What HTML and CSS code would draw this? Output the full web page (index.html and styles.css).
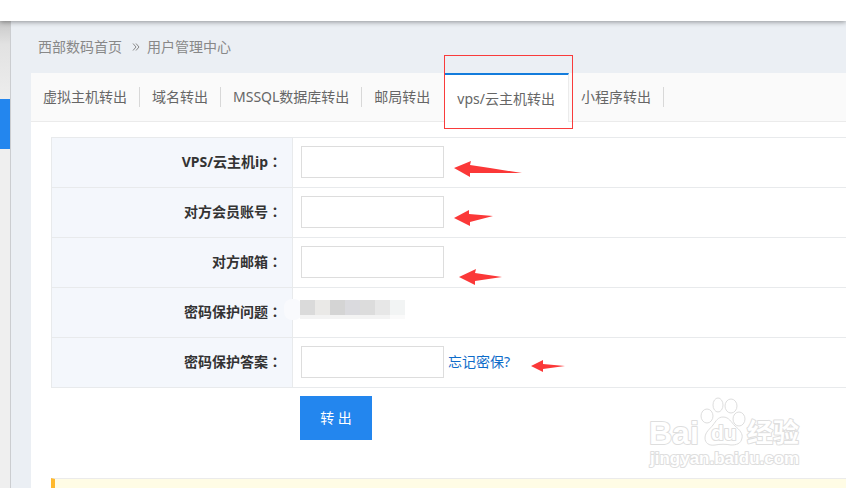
FILE: index.html
```html
<!DOCTYPE html>
<html lang="zh-CN">
    <head>
        <meta charset="UTF-8" />
        <meta name="viewport" content="width=device-width, initial-scale=1.0" />
        <title>用户管理中心</title>
        <link rel="stylesheet" href="styles.css" />
    </head>
    <body>
        <header class="top-bar"></header>
        <div class="layout">
            <aside class="sidebar">
                <div class="sidebar-photo"></div>
                <div class="sidebar-current"></div>
            </aside>
            <main class="content">
                <nav class="breadcrumb">
                    <a href="#">西部数码首页</a>
                    <svg class="chevron" viewBox="0 0 8 8" aria-hidden="true">
                        <path d="M1 0.5L4 4L1 7.5M4 0.5L7 4L4 7.5" />
                    </svg>
                    <a href="#">用户管理中心</a>
                </nav>
                <section class="panel">
                    <nav class="tabs">
                        <a class="tab" href="#"><span>虚拟主机转出</span></a>
                        <a class="tab" href="#"><span>域名转出</span></a>
                        <a class="tab" href="#"><span>MSSQL数据库转出</span></a>
                        <a class="tab before-active" href="#"><span>邮局转出</span></a>
                        <a class="tab active" href="#"><span>vps/云主机转出</span></a>
                        <a class="tab" href="#"><span>小程序转出</span></a>
                    </nav>
                    <form class="transfer-form">
                        <table class="fields">
                            <tr>
                                <th><label for="ip">VPS/云主机ip<span class="colon" lang="zh-TW">：</span></label></th>
                                <td><input type="text" id="ip" /></td>
                            </tr>
                            <tr>
                                <th><label for="account">对方会员账号<span class="colon" lang="zh-TW">：</span></label></th>
                                <td><input type="text" id="account" /></td>
                            </tr>
                            <tr>
                                <th><label for="email">对方邮箱<span class="colon" lang="zh-TW">：</span></label></th>
                                <td><input type="text" id="email" /></td>
                            </tr>
                            <tr>
                                <th>密码保护问题<span class="colon" lang="zh-TW">：</span></th>
                                <td></td>
                            </tr>
                            <tr>
                                <th><label for="answer">密码保护答案<span class="colon" lang="zh-TW">：</span></label></th>
                                <td>
                                    <div class="field-row">
                                        <input type="text" id="answer" />
                                        <a class="forgot" href="#">忘记密保?</a>
                                    </div>
                                </td>
                            </tr>
                        </table>
                        <button class="submit" type="submit">转 出</button>
                    </form>
                    <div class="notice"></div>
                </section>
            </main>
        </div>

        <!-- 标注层 -->
        <svg class="marks" width="846" height="488" viewBox="0 0 846 488" aria-hidden="true">
            <rect class="mark-box" x="444.5" y="55.5" width="128" height="73" />
            <g class="arrows">
                <path d="M454 168L471 161L470 165L490 168L522 173L470 173L470 177Z" />
                <path d="M454 218L469 210L469 214L493 216L470 222L470 226Z" />
                <path d="M459 277L476 269L475 273L502 277L475 281L475 285Z" />
                <path d="M531 366L543 360L543 364L565 366L543 369L543 372Z" />
            </g>
            <g class="mosaic">
                <rect x="284" y="299" width="18" height="21" rx="8" fill="#f9fafd" />
                <rect x="300" y="300" width="15" height="15" fill="#dadada" />
                <rect x="315" y="300" width="15" height="15" fill="#eae9e7" />
                <rect x="330" y="300" width="15" height="15" fill="#d4d4d4" />
                <rect x="345" y="300" width="15" height="15" fill="#dadade" />
                <rect x="360" y="300" width="15" height="15" fill="#dcdcdc" />
                <rect x="375" y="300" width="15" height="15" fill="#e7e7e7" />
                <rect x="390" y="300" width="15" height="15" fill="#f2f4f4" />
                <rect x="300" y="315" width="90" height="4" fill="#f3f3f3" />
                <rect x="390" y="315" width="15" height="4" fill="#fafafa" />
            </g>
        </svg>

        <svg class="watermark" width="160" height="76" viewBox="0 0 160 76">
            <text class="wm-name" x="4" y="49">Bai</text>
            <g class="paw">
                <ellipse cx="62" cy="21" rx="6" ry="7" />
                <ellipse cx="73" cy="10" rx="5" ry="7" />
                <ellipse cx="86" cy="11" rx="6" ry="7" />
                <ellipse cx="94" cy="24" rx="6" ry="7" />
                <path d="M78 22C84 22 86 27 90 31C95 35 98 39 97 43C96 49 91 50 86 50C81 49 75 49 70 50C64 51 60 48 60 43C60 37 65 34 68 30C71 26 73 22 78 22Z" />
            </g>
            <text class="wm-du" x="66" y="45">du</text>
            <text class="wm-cn" x="102" y="47">经验</text>
            <text class="wm-url" x="5" y="69">jingyan.baidu.com</text>
        </svg>
    </body>
</html>
```

FILE: styles.css
```css
* {
    padding: 0;
    margin: 0;
    box-sizing: border-box;
}
body {
    position: relative;
    display: flex;
    flex-direction: column;
    min-height: 100vh;
    background-color: #ebeff4;
    color: #666;
    font-family: "Noto Sans", "Noto Sans CJK SC", sans-serif;
    font-size: 14px;
    line-height: 20px;
}
a {
    color: inherit;
    text-decoration: none;
}

.top-bar {
    flex: none;
    height: 21px;
    background-color: #fff;
    box-shadow: 0 1px 5px rgba(0, 0, 0, 0.4);
    z-index: 1;
}
.layout {
    flex: 1;
    display: flex;
}

.sidebar {
    flex: none;
    width: 11px;
    background-color: #efefef;
    border-right: 1px solid #cbcdd0;
}
.sidebar-photo {
    height: 78px;
    background: linear-gradient(#c8c8c8, #e2e2e2 30%, #ededed);
}
.sidebar-current {
    height: 50px;
    background-color: #2386ee;
}

.content {
    flex: 1;
    display: flex;
    flex-direction: column;
    min-width: 0;
    padding-left: 20px;
}
.breadcrumb {
    display: flex;
    align-items: center;
    height: 52px;
    padding-left: 7px;
    color: #888;
}
.chevron {
    width: 8px;
    height: 8px;
    margin: 0 7px 0 10px;
    fill: none;
    stroke: #888;
}

.panel {
    flex: 1;
    display: flex;
    flex-direction: column;
    background-color: #fff;
}
.tabs {
    display: flex;
    height: 49px;
    background-color: #fafafa;
    border-bottom: 1px solid #ebebeb;
}
.tab {
    display: flex;
    align-items: center;
    white-space: nowrap;
}
.tab span {
    padding: 0 12px;
    border-right: 1px solid #d8d8d8;
}
.before-active {
    padding-right: 2px;
}
.before-active span {
    border-right: none;
}
.active {
    height: 49px;
    background-color: #fff;
    border-top: 2px solid #137cdc;
    border-right: 1px solid #ebebeb;
}
.active span {
    padding: 0 13px;
    border-right: none;
}

.transfer-form {
    padding: 15px 0 0 20px;
}
.fields {
    width: 100%;
    border-collapse: collapse;
    border: 1px solid #e8eaec;
    border-right: none;
}
.fields tr {
    height: 50px;
    border-bottom: 1px solid #e8eaec;
}
.fields th {
    width: 241px;
    padding: 0 10px 2px 0;
    background-color: #f4f7fc;
    border-right: 1px solid #e8eaec;
    color: #333;
    font-weight: bold;
    text-align: right;
}
.fields td {
    padding: 0 0 2px 8px;
}
.fields input {
    display: block;
    width: 143px;
    height: 32px;
    padding: 0 8px;
    background-color: #fff;
    border: 1px solid #ddd;
    font: inherit;
}
.colon {
    font-family: "Noto Sans CJK TC", sans-serif;
}
.field-row {
    display: flex;
    align-items: center;
    gap: 4px;
}
.forgot {
    color: #0e6cc9;
}
.submit {
    display: block;
    width: 72px;
    height: 44px;
    margin: 8px 0 38px 249px;
    background-color: #2386ee;
    border: none;
    color: #fff;
    font: inherit;
}
.notice {
    flex: 1;
    min-height: 10px;
    margin-left: 20px;
    background-color: #fffce5;
    border-top: 1px solid #ebebeb;
    border-left: 4px solid #ffb92e;
}

.marks {
    position: absolute;
    top: 0;
    left: 0;
    z-index: 2;
    pointer-events: none;
}
.mark-box {
    fill: none;
    stroke: #f93b3b;
}
.arrows {
    fill: #fb3838;
}

.watermark {
    position: absolute;
    left: 645px;
    top: 395px;
    z-index: 2;
    fill: #fff;
    stroke: #dedede;
    stroke-width: 2px;
    stroke-linejoin: round;
    paint-order: stroke;
    pointer-events: none;
}
.paw {
    paint-order: normal;
    stroke-width: 1px;
}
.wm-name {
    font: bold 32px "Liberation Sans", sans-serif;
}
.wm-du {
    font: bold 21px "Liberation Sans", sans-serif;
}
.wm-cn {
    font: bold 26px "Noto Sans CJK SC", sans-serif;
}
.wm-url {
    font: bold 17px "Liberation Sans", sans-serif;
}
```
